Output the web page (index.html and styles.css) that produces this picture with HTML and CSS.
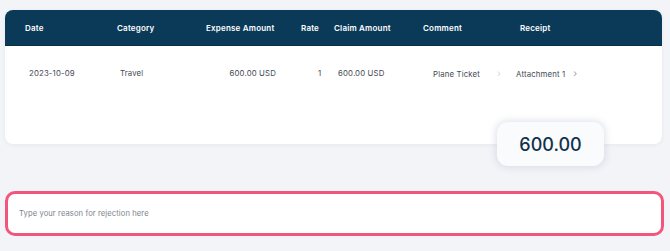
FILE: index.html
```html
<!DOCTYPE html>
<html>
<head>
<meta charset="utf-8">
<link rel="stylesheet" href="styles.css">
</head>
<body>
<div class="page">
  <div class="card">
    <div class="grid head">
      <div class="c c-date">Date</div>
      <div class="c c-cat">Category</div>
      <div class="c c-exp">Expense Amount</div>
      <div class="c c-rate">Rate</div>
      <div class="c c-claim">Claim Amount</div>
      <div class="c c-com">Comment</div>
      <div class="c c-rec">Receipt</div>
    </div>
    <div class="grid row">
      <div class="c c-date">2023-10-09</div>
      <div class="c c-cat">Travel</div>
      <div class="c c-exp">600.00 USD</div>
      <div class="c c-rate">1</div>
      <div class="c c-claim">600.00 USD</div>
      <div class="c c-com">Plane Ticket<span class="chev faint">&rsaquo;</span></div>
      <div class="c c-rec">Attachment 1<span class="chev">&rsaquo;</span></div>
    </div>
  </div>
  <div class="total-wrap">
    <div class="total">600.00</div>
  </div>
  <div class="reason">
    <span class="placeholder">Type your reason for rejection here</span>
  </div>
</div>
</body>
</html>
```
FILE: styles.css
```css
* { box-sizing: border-box; }
html, body { margin: 0; padding: 0; }
body {
  width: 670px;
  height: 251px;
  background: #f2f4f7;
  font-family: "Inter", "Noto Sans", sans-serif;
  overflow: hidden;
}
.page {
  padding: 10px 7px 0 5px;
}
.card {
  width: 657px;
  height: 134px;
  background: #ffffff;
  border-radius: 8px;
  box-shadow: 0 1px 4px rgba(30, 50, 80, 0.06);
  overflow: hidden;
}
.grid {
  display: grid;
  grid-template-columns: 92px 89px 95px 33px 89px 97px 1fr;
  padding-left: 20px;
  align-items: center;
}
.head {
  height: 36px;
  background: #0b3a59;
  color: #ffffff;
  font-size: 8px;
  font-weight: 600;
  letter-spacing: 0.2px;
  border-bottom: 1px solid #0a2f48;
}
.row {
  height: 54px;
  color: #454b55;
  font-size: 7.8px;
  letter-spacing: 0.15px;
}
.c { white-space: nowrap; }
.row .c-date { padding-left: 4px; }
.row .c-cat { padding-left: 3px; }
.row .c-exp { text-align: right; padding-right: 25px; }
.row .c-rate { padding-left: 17px; }
.row .c-claim { padding-left: 4px; }
.row .c-com { padding-left: 10px; }
.row .c-rec { margin-left: -4px; }
.chev {
  display: inline-block;
  margin-left: 8px;
  color: #9aa1ab;
  font-size: 10px;
}
.chev.faint {
  margin-left: 17px;
  color: #d6d9de;
}
.total-wrap {
  display: flex;
  justify-content: flex-end;
  margin-top: -22px;
  padding-right: 59px;
}
.total {
  width: 107px;
  height: 44px;
  background: #fafbfc;
  border-radius: 11px;
  box-shadow: 0 0 6px 2px rgba(190, 200, 215, 0.45);
  display: flex;
  align-items: center;
  justify-content: center;
  color: #12314d;
  font-size: 18px;
  font-weight: 500;
  position: relative;
}
.reason {
  margin-top: 25px;
  width: 659px;
  height: 45px;
  background: #ffffff;
  border: 3px solid #f2567c;
  border-radius: 10px;
  display: flex;
  align-items: center;
  padding-left: 11px;
}
.placeholder {
  color: #7d838c;
  font-size: 7.6px;
  letter-spacing: 0.1px;
}
```
